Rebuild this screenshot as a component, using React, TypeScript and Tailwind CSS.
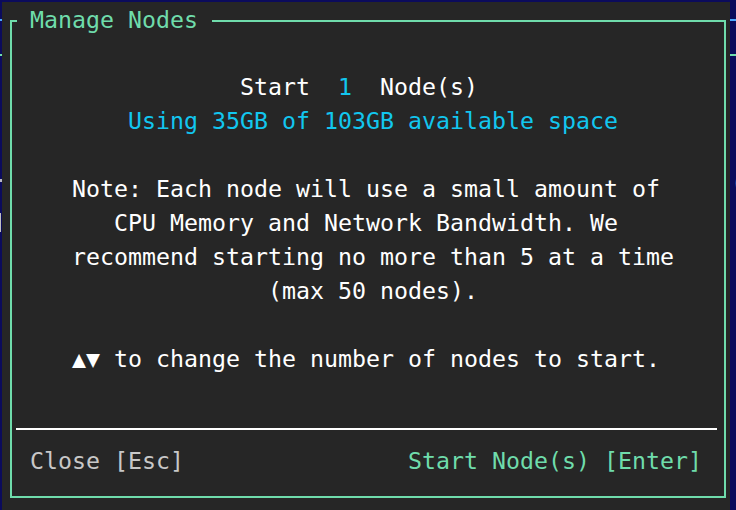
import React from 'react';

const mono = "font-['DejaVu_Sans_Mono','Liberation_Mono',monospace]";

export default function App() {
  return (
    <div className={`flex w-[736px] h-[510px] overflow-hidden bg-[#0b0b5c] text-[23.25px] ${mono}`}>
      {/* left edge of the screen behind the dialog */}
      <div className="flex flex-col w-[2px] shrink-0">
        <div className="mt-[19px] h-[2px] bg-[#4aa8ff]" />
        <div className="mt-[33px] h-[2px] bg-[#6fdcab]" />
        <div className="mt-[123px] h-[3px] bg-[#b8b8c8]" />
        <div className="mt-[31px] h-[19px] w-[1px] bg-[#c0c0c0]" />
      </div>

      {/* dialog */}
      <div className="flex flex-col mt-[2px] w-[728px] h-[508px] shrink-0 bg-[#262626]">
        <div className="flex flex-col ml-[8px] mr-[4px] mt-[18px] h-[478px] border-x-2 border-b-2 border-[#6fdcab]">
          {/* title bar */}
          <div className="flex items-center h-[2px]">
            <div className="w-[5px] h-[2px] bg-[#6fdcab]" />
            <span className="pl-[13px] pr-[14px] leading-[34px] whitespace-nowrap text-[#6fdcab] -translate-y-[1px]">
              Manage Nodes
            </span>
            <div className="flex-1 h-[2px] bg-[#6fdcab]" />
          </div>

          {/* body */}
          <div className="flex flex-col pr-[4px] text-center leading-[34px] text-white whitespace-pre">
            <div className="mt-[48px] pr-[14px]">
              Start  <span className="text-[#12c6ef]">1</span>  Node(s)
            </div>
            <div className="pl-[14px] text-[#12c6ef]">Using 35GB of 103GB available space</div>

            <div className="mt-[34px]">Note: Each node will use a small amount of</div>
            <div>CPU Memory and Network Bandwidth. We</div>
            <div className="pl-[14px]">recommend starting no more than 5 at a time</div>
            <div className="pl-[14px]">(max 50 nodes).</div>

            <div className="mt-[34px]">▲▼ to change the number of nodes to start.</div>
          </div>

          <div className="mt-[52px] ml-[4px] mr-[7px] h-[2px] bg-white" />

          {/* actions */}
          <div className="flex justify-between mt-[14px] leading-[34px] whitespace-pre">
            <span className="pl-[18px] text-[#c8c8c8]">Close [Esc]</span>
            <span className="pr-[22px] text-[#6fdcab]">Start Node(s) [Enter]</span>
          </div>
        </div>
      </div>

      {/* right edge of the screen behind the dialog */}
      <div className="flex flex-col w-[6px] shrink-0 overflow-hidden">
        <div className="mt-[19px] h-[2px] bg-[#4aa8ff]" />
        <div className="mt-[33px] h-[2px] bg-[#6fdcab]" />
        <div className="mt-[110px] pl-[1px] leading-[34px] text-[#c8c8c8] whitespace-pre">(</div>
      </div>
    </div>
  );
}
